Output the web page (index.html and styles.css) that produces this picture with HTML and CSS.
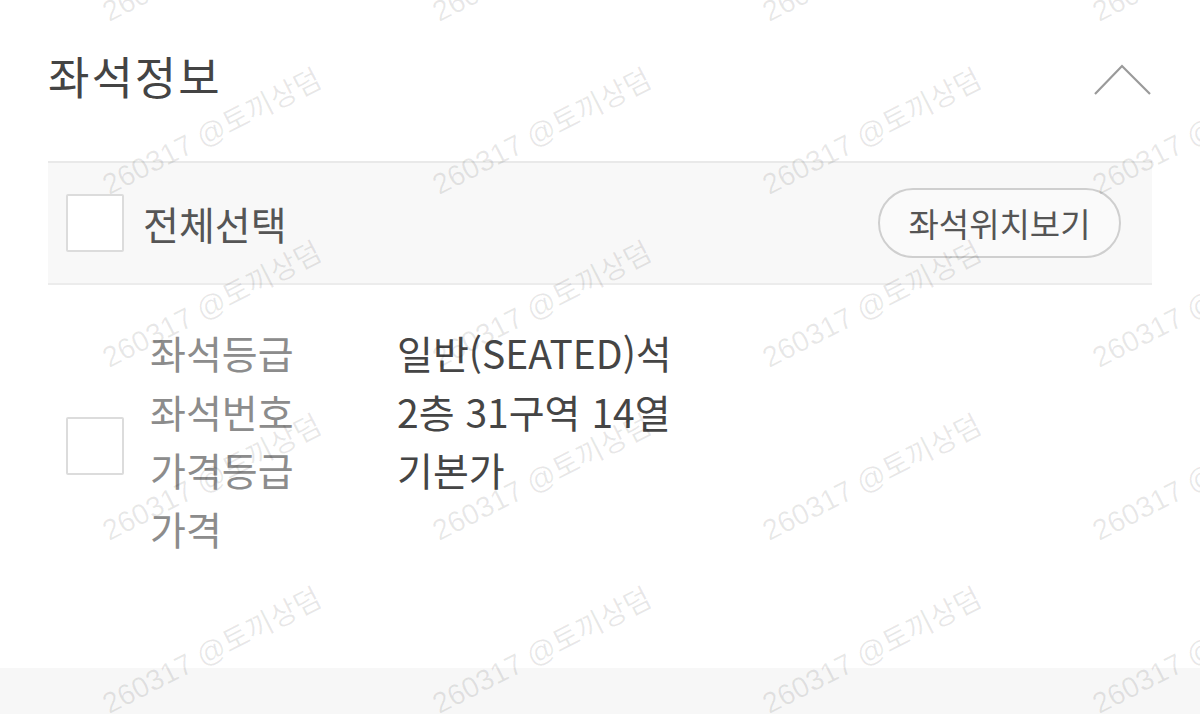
FILE: index.html
```html
<!DOCTYPE html>
<html lang="ko">
  <head>
    <meta charset="utf-8">
    <link rel="stylesheet" href="styles.css">
  </head>
  <body>
    <div class="page">
      <div class="section">
        <div class="header">
          <h2 class="title">좌석정보</h2>
          <svg class="chevron" width="58" height="32" viewBox="0 0 58 32">
            <polyline points="1,30 28,2 56,30" fill="none" stroke="#9a9a9a" stroke-width="2.2" />
          </svg>
        </div>

        <div class="select-bar">
          <label class="check-label">
            <span class="checkbox"></span>
            <span>전체선택</span>
          </label>
          <button class="pill">좌석위치보기</button>
        </div>

        <div class="seat-row">
          <span class="checkbox row-check"></span>
          <div class="seat-info">
            <div class="info-line"><span class="label">좌석등급</span><span class="value">일반(SEATED)석</span></div>
            <div class="info-line"><span class="label">좌석번호</span><span class="value">2층 31구역 14열</span></div>
            <div class="info-line"><span class="label">가격등급</span><span class="value">기본가</span></div>
            <div class="info-line"><span class="label">가격</span><span class="value"></span></div>
          </div>
        </div>
      </div>

      <div class="footer-strip"></div>
    </div>

    <div class="watermarks">
      <span>260317 @토끼상덤</span><span>260317 @토끼상덤</span><span>260317 @토끼상덤</span><span>260317 @토끼상덤</span>
      <span>260317 @토끼상덤</span><span>260317 @토끼상덤</span><span>260317 @토끼상덤</span><span>260317 @토끼상덤</span>
      <span>260317 @토끼상덤</span><span>260317 @토끼상덤</span><span>260317 @토끼상덤</span><span>260317 @토끼상덤</span>
      <span>260317 @토끼상덤</span><span>260317 @토끼상덤</span><span>260317 @토끼상덤</span><span>260317 @토끼상덤</span>
      <span>260317 @토끼상덤</span><span>260317 @토끼상덤</span><span>260317 @토끼상덤</span><span>260317 @토끼상덤</span>
    </div>
  </body>
</html>
```

FILE: styles.css
```css
html, body {
  margin: 0;
  height: 100%;
}
body {
  font-family: "Noto Sans CJK KR", "Noto Sans", sans-serif;
  background: white;
  color: #444;
  overflow: hidden;
  position: relative;
}
.page {
  display: flex;
  flex-direction: column;
  min-height: 100vh;
}
.section {
  flex: 1;
  padding: 0 48px;
}
.header {
  height: 161px;
  box-sizing: border-box;
  padding-bottom: 10px;
  display: flex;
  justify-content: space-between;
  align-items: center;
}
.title {
  margin: 0;
  font-size: 45px;
  font-weight: 400;
  line-height: 1;
  letter-spacing: 2px;
  color: #444;
}
.chevron {
  margin-top: 8px;
}
.select-bar {
  height: 124px;
  box-sizing: border-box;
  background: #f8f8f8;
  border-top: 2px solid #e9e9e9;
  border-bottom: 2px solid #ececec;
  display: flex;
  align-items: center;
  justify-content: space-between;
  padding: 0 31px 0 18px;
}
.check-label {
  display: flex;
  align-items: center;
  gap: 19px;
  font-size: 39px;
  color: #555;
}
.checkbox {
  display: inline-block;
  width: 58px;
  height: 58px;
  box-sizing: border-box;
  border: 2px solid #dcdcdc;
  background: white;
  border-radius: 2px;
  flex-shrink: 0;
}
.pill {
  font-family: inherit;
  width: 243px;
  height: 70px;
  border: 2px solid #cfcfcf;
  border-radius: 35px;
  background: #fafafa;
  color: #555;
  font-size: 33px;
  padding: 0;
}
.seat-row {
  display: flex;
  align-items: center;
  padding: 38px 0 0 18px;
}
.row-check {
  margin-top: 12px;
}
.seat-info {
  margin-left: 26px;
}
.info-line {
  display: flex;
  font-size: 39px;
  line-height: 58.5px;
}
.label {
  width: 247px;
  color: #8c8c8c;
}
.value {
  color: #454545;
}
.footer-strip {
  height: 46px;
  background: #f7f7f7;
}
.watermarks {
  position: absolute;
  top: -131px;
  left: 45px;
  display: grid;
  grid-template-columns: repeat(4, 330px);
  grid-auto-rows: 173px;
  place-items: center;
  pointer-events: none;
}
.watermarks span {
  white-space: nowrap;
  font-family: "Liberation Sans", "Noto Sans CJK KR", sans-serif;
  font-size: 29px;
  color: rgba(0, 0, 0, 0.09);
  transform: rotate(-27deg);
}
```
